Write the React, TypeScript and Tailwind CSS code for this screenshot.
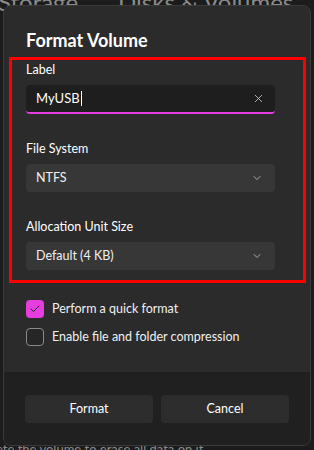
import { Check, ChevronDown, X } from 'lucide-react';

const FONT = { fontFamily: 'Lato, "Noto Sans", sans-serif' };

function Field({ label, children }: { label: string; children: React.ReactNode }) {
  return (
    <div className="flex flex-col gap-[6px]">
      <span className="text-[12.5px] leading-[18px] text-white">{label}</span>
      {children}
    </div>
  );
}

function Select({ value }: { value: string }) {
  return (
    <div className="flex h-[28px] w-[249px] items-center justify-between rounded-[4px] bg-[#373737] pl-[10px] pr-[12px]">
      <span className="text-[12.5px] text-[#f0f0f0]">{value}</span>
      <ChevronDown size={12} strokeWidth={1.5} className="text-[#cfcfcf]" />
    </div>
  );
}

export default function App() {
  return (
    <div className="relative h-[450px] w-[314px] overflow-hidden bg-[#1c1c1c]" style={FONT}>
      {/* page behind the dialog */}
      <div className="absolute left-[-2px] top-[-16px] flex gap-[40px] text-[24px] text-[#8a8a8a]">
        <span>Storage</span>
        <span>Disks &amp; Volumes</span>
      </div>
      <div className="absolute left-[-4px] top-[440px] text-[13px] text-[#8a8a8a]">
        ete the volume to erase all data on it.
      </div>

      <div className="relative ml-[3px] mt-[5px] flex h-[441px] w-[308px] flex-col overflow-hidden rounded-[8px] border border-[#3a3a3a] bg-[#2b2b2b]">
        <div className="flex-1">
          <h1 className="pl-[22px] pt-[22px] text-[18px] font-bold leading-[24px] text-white">Format Volume</h1>

          {/* highlighted region */}
          <div className="ml-[5px] mt-[5px] flex w-[297px] flex-col gap-[26px] border-[3px] border-[#ff0000] pb-[10px] pl-[14px] pt-[1px]">
            <Field label="Label">
              <div className="flex h-[29px] w-[249px] items-center justify-between rounded-[4px] border-b-2 border-[#e63de0] bg-[#1e1e1e] pl-[10px] pr-[10px]">
                <span className="flex items-center text-[13px] text-white">
                  MyUSB<span className="ml-px h-[15px] w-px bg-white" />
                </span>
                <X size={13} strokeWidth={1.5} className="text-[#d0d0d0]" />
              </div>
            </Field>
            <Field label="File System">
              <Select value="NTFS" />
            </Field>
            <Field label="Allocation Unit Size">
              <Select value="Default (4 KB)" />
            </Field>
          </div>

          <div className="mt-[17px] flex flex-col gap-[10px] pl-[22px]">
            <label className="flex items-center gap-[8px]">
              <span className="flex h-[18px] w-[18px] items-center justify-center rounded-[4px] bg-[#e63de0]">
                <Check size={12} strokeWidth={2} className="text-[#1c1c1c]" />
              </span>
              <span className="text-[12.5px] leading-[18px] text-[#f0f0f0]">Perform a quick format</span>
            </label>
            <label className="flex items-center gap-[8px]">
              <span className="h-[18px] w-[18px] rounded-[4px] border border-[#8a8a8a] bg-[#262626]" />
              <span className="text-[12.5px] leading-[18px] text-[#f0f0f0]">Enable file and folder compression</span>
            </label>
          </div>
        </div>

        <div className="flex h-[73px] gap-[8px] border-t border-[#1e1e1e] bg-[#202020] px-[21px] pt-[22px]">
          <button className="h-[28px] flex-1 rounded-[4px] bg-[#2d2d2d] text-[12.5px] text-white">Format</button>
          <button className="h-[28px] flex-1 rounded-[4px] bg-[#2d2d2d] text-[12.5px] text-white">Cancel</button>
        </div>
      </div>
    </div>
  );
}
